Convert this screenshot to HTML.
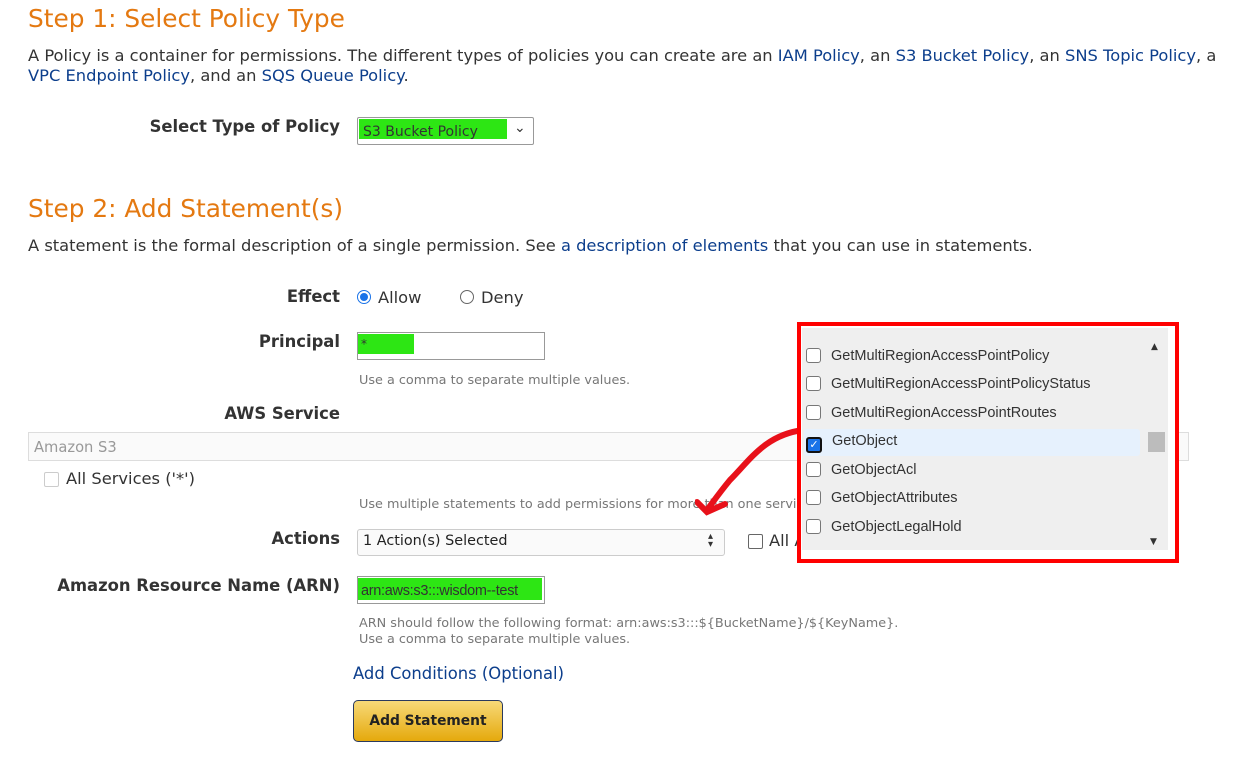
<!DOCTYPE html>
<html><head><meta charset="utf-8"><style>
body{margin:0;width:1251px;height:769px;background:#fff;position:relative;overflow:hidden;font-family:"DejaVu Sans",sans-serif;color:#333}
.a{position:absolute;white-space:nowrap}
h2{position:absolute;margin:0;font-weight:normal;color:#e47911;font-size:24.8px}
.p{font-size:16.3px;color:#333}
.l{color:#0c3e8c}
.lab{font-weight:bold;font-size:16.4px;color:#333;text-align:right;width:340px;left:0}
.hint{font-size:12.8px;color:#777}
.box{position:absolute;border:1px solid #999;background:#fff}
.g{position:absolute;background:#2de614}
.item{position:absolute;left:806px;font-size:14.5px;color:#333;height:26px;line-height:26px;font-family:"Liberation Sans",sans-serif}
.cb{display:inline-block;width:13px;height:13px;border:1px solid #777;border-radius:3px;vertical-align:-3px;margin-right:10px;background:#fff}
</style></head><body>
<h2 style="left:28px;top:4px">Step 1: Select Policy Type</h2>
<div class="a p" style="left:28px;top:46px">A Policy is a container for permissions. The different types of policies you can create are an <span class="l">IAM Policy</span>, an <span class="l">S3 Bucket Policy</span>, an <span class="l">SNS Topic Policy</span>, a</div>
<div class="a p" style="left:28px;top:66px"><span class="l">VPC Endpoint Policy</span>, and an <span class="l">SQS Queue Policy</span>.</div>
<div class="a lab" style="top:117px">Select Type of Policy</div>
<div class="box" style="left:357px;top:117px;width:175px;height:26px;border-radius:2px"></div>
<div class="g" style="left:359px;top:119px;width:148px;height:20px"></div>
<div class="a" style="left:363px;top:124px;font-size:14px;color:#333">S3 Bucket Policy</div>
<div class="a" style="left:514px;top:120px;font-size:14px">⌄</div>

<h2 style="left:28px;top:194px">Step 2: Add Statement(s)</h2>
<div class="a p" style="left:28px;top:236px">A statement is the formal description of a single permission. See <span class="l">a description of elements</span> that you can use in statements.</div>
<div class="a lab" style="top:287px">Effect</div>
<div class="a" style="left:357px;top:290px;width:12px;height:12px;border:1px solid #1a73e8;border-radius:50%;background:#fff"><div style="margin:2px;width:8px;height:8px;border-radius:50%;background:#1a73e8"></div></div>
<div class="a p" style="left:378px;top:288px">Allow</div>
<div class="a" style="left:460px;top:290px;width:12px;height:12px;border:1px solid #666;border-radius:50%"></div>
<div class="a p" style="left:481px;top:288px">Deny</div>
<div class="a lab" style="top:332px">Principal</div>
<div class="box" style="left:357px;top:332px;width:186px;height:26px"></div>
<div class="g" style="left:358px;top:334px;width:56px;height:20px"></div>
<div class="a" style="left:361px;top:337px;font-size:12px">*</div>
<div class="a hint" style="left:359px;top:373px">Use a comma to separate multiple values.</div>
<div class="a lab" style="top:404px">AWS Service</div>
<div class="box" style="left:28px;top:432px;width:1159px;height:27px;border-color:#ddd;background:#fafafa"></div>
<div class="a" style="left:34px;top:439px;font-size:14.7px;color:#999">Amazon S3</div>
<div class="a" style="left:44px;top:472px;width:13px;height:13px;border:1px solid #ccc;border-radius:2px"></div>
<div class="a p" style="left:66px;top:469px">All Services ('*')</div>
<div class="a hint" style="left:359px;top:497px">Use multiple statements to add permissions for more than one service.</div>
<div class="a lab" style="top:529px">Actions</div>
<div class="box" style="left:357px;top:529px;width:366px;height:25px;border-color:#ccc;border-radius:3px;background:#fafafa"></div>
<div class="a" style="left:363px;top:533px;font-size:14.4px;color:#222">1 Action(s) Selected</div>
<div class="a" style="left:708px;top:533px;font-size:10px;line-height:8px">▴<br>▾</div>
<div class="a" style="left:748px;top:534px;width:13px;height:13px;border:1px solid #666;border-radius:2px"></div>
<div class="a p" style="left:769px;top:531px">All Actions</div>
<div class="a lab" style="top:576px">Amazon Resource Name (ARN)</div>
<div class="box" style="left:357px;top:576px;width:186px;height:26px"></div>
<div class="g" style="left:358px;top:578px;width:184px;height:22px"></div>
<div class="a" style="left:361px;top:583px;font-size:14.5px;color:#333;font-family:'Liberation Sans',sans-serif;letter-spacing:-0.3px">arn:aws:s3:::wisdom--test</div>
<div class="a hint" style="left:359px;top:616px">ARN should follow the following format: arn:aws:s3:::${BucketName}/${KeyName}.</div>
<div class="a hint" style="left:359px;top:632px">Use a comma to separate multiple values.</div>
<div class="a" style="left:353px;top:664px;font-size:16.4px;color:#0c3e8c">Add Conditions (Optional)</div>
<div class="a" style="left:353px;top:700px;width:148px;height:40px;border:1px solid #2a3a5e;border-radius:5px;background:linear-gradient(#f7d978,#e5a90c);text-align:center;line-height:41px;font-weight:bold;font-size:13.8px;color:#222">Add Statement</div>

<svg class="a" style="left:695px;top:420px" width="110" height="100"><path d="M108 10 C70 15 55 40 35 60 C25 72 18 82 12 90 M2 82 L12 92 L30 84" stroke="#e8111a" stroke-width="6" fill="none" stroke-linecap="round"/></svg>

<div class="a" style="left:797px;top:322px;width:374px;height:233px;border:4px solid #f00;background:#fff"></div>
<div class="a" style="left:802px;top:328px;width:366px;height:222px;background:#efefef"></div>
<div class="a" style="left:804px;top:429px;width:336px;height:27px;background:#e6f1fd;border-radius:3px"></div>
<div class="a" style="left:1148px;top:432px;width:17px;height:20px;background:#bcbcbc"></div>
<div class="a" style="left:1151px;top:342px;font-size:9px;color:#333">▲</div>
<div class="a" style="left:1150px;top:537px;font-size:9px;color:#333">▼</div>
<div class="item" style="top:343px"><span class="cb"></span>GetMultiRegionAccessPointPolicy</div>
<div class="item" style="top:371px"><span class="cb"></span>GetMultiRegionAccessPointPolicyStatus</div>
<div class="item" style="top:400px"><span class="cb"></span>GetMultiRegionAccessPointRoutes</div>
<div class="item" style="top:428px"><span class="cb" style="background:#1a73e8;border:2px solid #111;width:12px;height:12px;color:#fff;font-size:11px;line-height:12px;text-align:center">✓</span>GetObject</div>
<div class="item" style="top:457px"><span class="cb"></span>GetObjectAcl</div>
<div class="item" style="top:485px"><span class="cb"></span>GetObjectAttributes</div>
<div class="item" style="top:514px"><span class="cb"></span>GetObjectLegalHold</div>
</body></html>
